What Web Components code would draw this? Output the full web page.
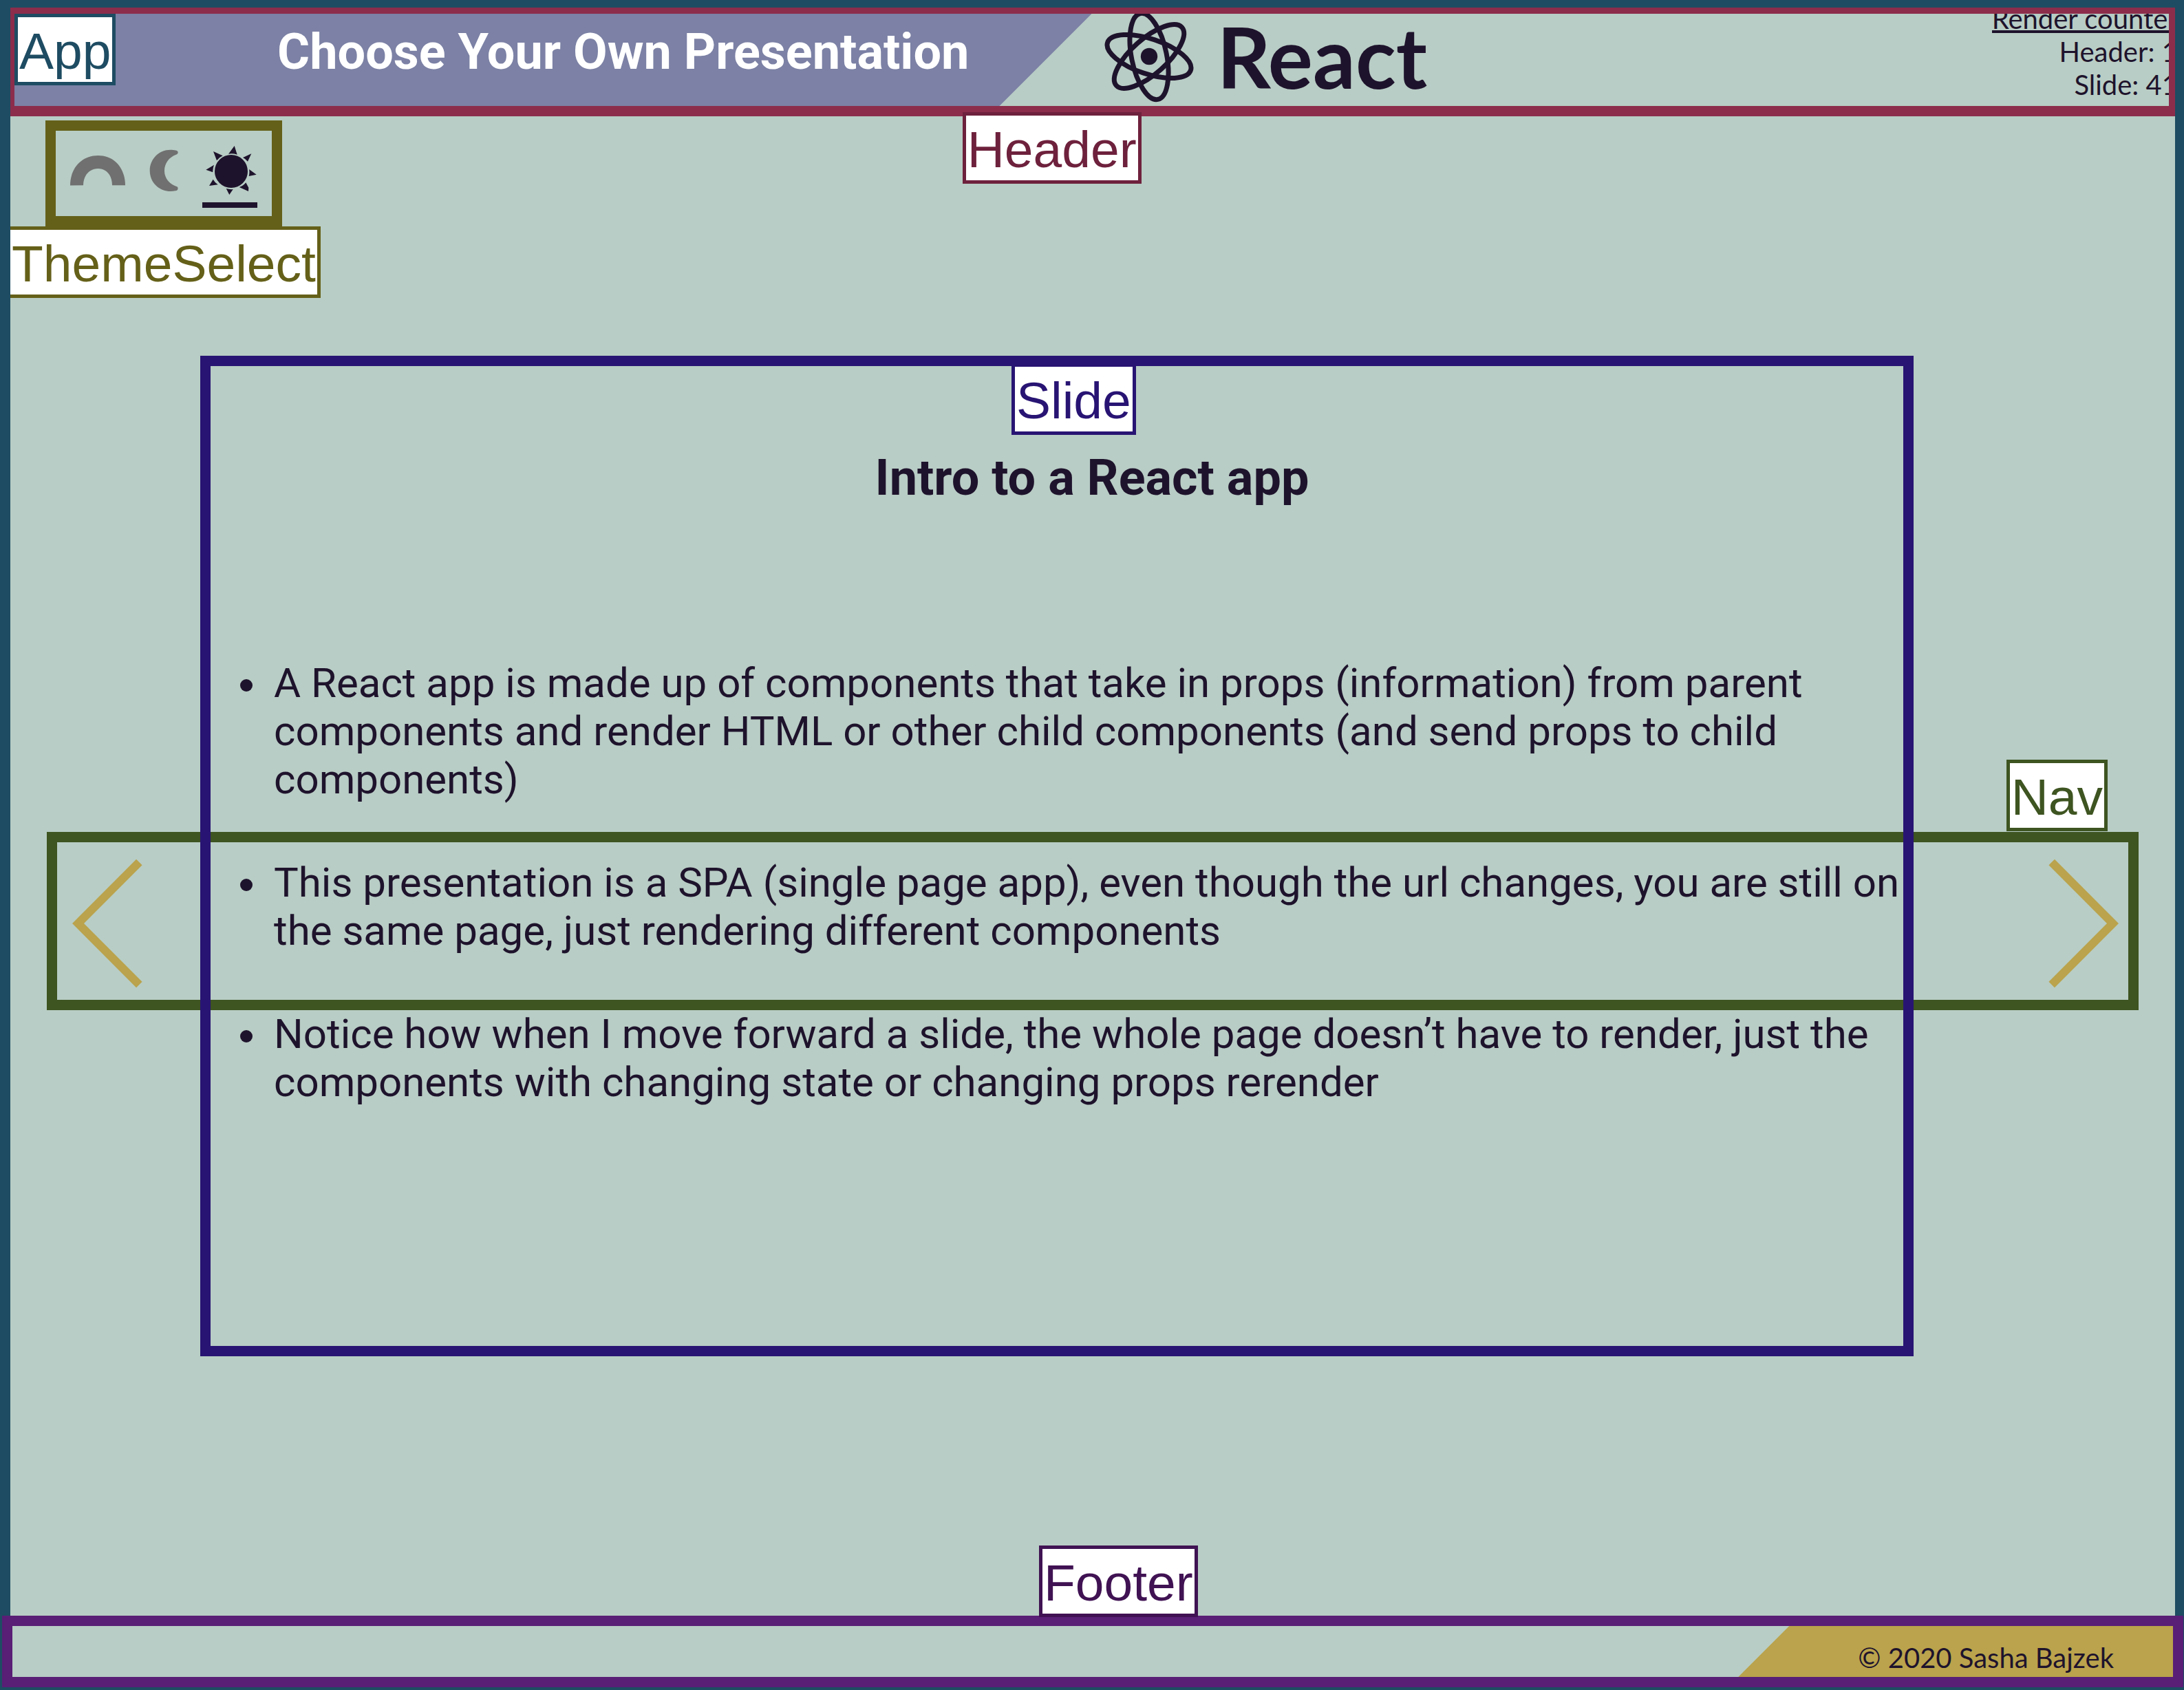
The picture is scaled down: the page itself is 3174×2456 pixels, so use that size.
<!DOCTYPE html>
<html lang="en">
<head>
<meta charset="utf-8">
<title>Choose Your Own Presentation</title>
<style>
  html, body { margin: 0; }
  body {
    --ink: #1e132c;
    --paper: #b8cdc5;
    --gold: #baa34c;
    color: var(--ink);
    background: var(--paper);
    font-family: Roboto, sans-serif;
  }
</style>
</head>
<body>
<deck-app></deck-app>

<script>
  const define = (name, html) => {
    const template = document.createElement('template');
    template.innerHTML = html;
    customElements.define(name, class extends HTMLElement {
      constructor() {
        super();
        this.attachShadow({ mode: 'open' }).append(template.content.cloneNode(true));
      }
    });
  };

  // Name tag pinned to the outline of a component
  define('name-tag', `
    <style>
      :host {
        display: block; position: absolute; z-index: 3; box-sizing: border-box;
        border: 5px solid; padding: 4px 2px 0; background: #fff;
        font: 75px/90px "Liberation Sans", sans-serif; white-space: nowrap;
      }
    </style>
    <slot></slot>`);

  // The orbit's top runs behind the header's border, so the box cuts it there
  define('react-mark', `
    <style>
      :host { display: block; height: 134px; overflow: clip; }
      svg { display: block; width: 134px; height: 134px; margin-top: -5px; overflow: visible; }
    </style>
    <svg viewBox="-67 -67 134 134" fill="none" stroke="currentColor" stroke-width="7" aria-hidden="true">
      <circle r="12.2" fill="currentColor" stroke="none"/>
      <ellipse rx="63.7" ry="25.5" transform="rotate(18.5)"/>
      <ellipse rx="63.7" ry="25.5" transform="rotate(78.5)"/>
      <ellipse rx="63.7" ry="25.5" transform="rotate(138.5)"/>
    </svg>`);

  define('render-counter', `
    <style>
      :host { display: block; height: 134px; overflow: clip; }
      div { margin: -17px -13px 0 0; font: 40px/48px Lato, sans-serif; text-align: right; white-space: nowrap; }
      p { margin: 0; }
      .head { text-decoration: underline; }
    </style>
    <div>
      <p class="head">Render counter</p>
      <p>Header: 1</p>
      <p>Slide: 41</p>
    </div>`);

  define('deck-header', `
    <style>
      :host {
        display: block; position: relative;
        border: solid #8c2d4c; border-width: 9px 9px 15px 6px;
      }
      .bar { display: flex; align-items: flex-start; height: 134px; }
      h1, h2 { margin: 0; white-space: nowrap; }
      h1 {
        flex: 0 0 50%; box-sizing: border-box; height: 134px; padding-left: 204px;
        background: #7c81a5; color: #fff; text-align: center;
        font: bold 72px/112px Roboto, sans-serif;
        clip-path: polygon(0 0, 100% 0, calc(100% - 134px) 100%, 0 100%);
      }
      .topic { display: flex; align-items: flex-start; gap: 32px; margin-left: 16px; }
      h2 { font: bold 122px/124px Lato, sans-serif; }
      render-counter { margin-left: auto; }
      name-tag { left: 44%; top: 143px; color: #6e213c; }
    </style>
    <div class="bar">
      <h1>Choose Your Own Presentation</h1>
      <div class="topic"><react-mark></react-mark><h2>React</h2></div>
      <render-counter></render-counter>
    </div>
    <name-tag>Header</name-tag>`);

  define('theme-select', `
    <style>
      :host {
        display: flex; gap: 16px; position: relative; width: fit-content;
        border: 15px solid #656019; padding: 12px 21px;
      }
      button {
        display: block; width: 80px; height: 100px; padding: 0; border: 0;
        border-bottom: 8px solid transparent; background: none; color: #707070; cursor: pointer;
      }
      button[aria-pressed="true"] { color: var(--ink); border-color: currentColor; }
      svg { display: block; width: 80px; height: 92px; fill: currentColor; }
      name-tag { left: -71px; top: 139px; color: #656019; }
    </style>
    <button type="button" aria-label="Rainbow theme" aria-pressed="false">
      <svg viewBox="0 0 80 92"><path d="M0 67.5C0 43 16 24 40.5 24S80 43 80 67.3H61C61 53 53 43 40.5 43S19 53 19 67.3Z"/></svg>
    </button>
    <button type="button" aria-label="Dark theme" aria-pressed="false">
      <svg viewBox="0 0 80 92"><path d="M59 17C55.500 16 52.500 15.700 49.700 15.700C33 15.700 19.700 29 19.700 46S33 76 49.700 76C52.500 76 55.500 75.700 58.500 75C61 74 61.500 69.500 58.500 69C48 65.500 41 57 41 46S48 26 58.500 22.500C61 21.500 61.500 18 59 17Z"/></svg>
    </button>
    <button type="button" aria-label="Light theme" aria-pressed="true">
      <svg viewBox="0 0 80 92">
        <circle cx="42" cy="47" r="24"/>
        <path d="M46.700 10L38 21.700Q44 20.500 50.700 22.700ZM71.300 21.300L59 27Q63 29 66 32.700ZM78.700 51.700L68 44Q69 49 67.700 54ZM67 76L53.700 70Q60 68 63.300 63.300L67.300 70.700ZM39.300 81L34.700 72Q40 73.500 44.700 73ZM10 68L15.700 58.700Q18 63 22.700 66.300ZM5.300 44.700L17 37.700Q15 43 15.300 48.300ZM16 18L29.700 24.300Q24 27 21 31.300Z"/>
      </svg>
    </button>
    <name-tag>ThemeSelect</name-tag>`);

  define('deck-slide', `
    <style>
      :host {
        display: block; position: relative; z-index: 1; box-sizing: border-box;
        border: 15px solid #281473; padding: 121px 0 348px; pointer-events: none;
      }
      name-tag { left: calc(50% - 66px); top: -4px; color: #281473; }
    </style>
    <slot></slot>
    <name-tag>Slide</name-tag>`);

  define('intro-slide', `
    <style>
      :host { display: block; }
      h3 { margin: 0 0 221px; padding-left: 102px; text-align: center; font: bold 72px/84px Roboto, sans-serif; }
      ul { margin: 0; padding: 0 0 0 92px; font: 60px/70px Roboto, sans-serif; list-style: none; }
      li + li { margin-top: 80px; }
      li::before {
        content: ""; display: inline-block; width: 18px; height: 18px; border-radius: 50%;
        margin: 0 31px 0 -49px; vertical-align: 8px; background: currentColor;
      }
    </style>
    <h3>Intro to a React app</h3>
    <ul>
      <li>A React app is made up of components that take in props (information) from parent components and render HTML or other child components (and send props to child components)</li>
      <li>This presentation is a SPA (single page app), even though the url changes, you are still on the same page, just rendering different components</li>
      <li>Notice how when I move forward a slide, the whole page doesn’t have to render, just the components with changing state or changing props rerender</li>
    </ul>`);

  define('deck-nav', `
    <style>
      :host { display: block; position: relative; box-sizing: border-box; border: 15px solid #3e5421; }
      nav { display: flex; justify-content: space-between; padding: 24px 14px 17px 22px; }
      a { display: block; color: var(--gold); }
      svg { display: block; width: 102px; height: 188px; fill: none; stroke: currentColor; stroke-width: 12; }
      name-tag { right: 30px; top: -120px; color: #3e5421; }
    </style>
    <nav aria-label="Slides">
      <a href="#previous" aria-label="Previous slide"><svg viewBox="0 0 102 188"><path d="M97.300 5L8.500 94L97.300 183"/></svg></a>
      <a href="#next" aria-label="Next slide"><svg viewBox="0 0 102 188"><path d="M4.700 5L93.500 94L4.700 183"/></svg></a>
    </nav>
    <name-tag>Nav</name-tag>`);

  define('deck-footer', `
    <style>
      :host { display: block; position: relative; border: 15px solid #591e76; background: var(--paper); }
      footer { display: flex; justify-content: flex-end; }
      p {
        margin: 0; padding: 22px 86px 4px 174px; background: var(--gold);
        font: 40px/48px Lato, sans-serif; white-space: nowrap;
        clip-path: polygon(74px 0, 100% 0, 100% 100%, 0 100%);
      }
      name-tag { left: calc(50% - 78px); top: -117px; color: #401253; }
    </style>
    <footer><p>© 2020 Sasha Bajzek</p></footer>
    <name-tag>Footer</name-tag>`);

  define('deck-app', `
    <style>
      :host {
        display: flex; flex-direction: column; position: relative; box-sizing: border-box;
        min-height: 100vh; border: solid #1e4c62; border-width: 11px 13px 4px 15px;
        background: var(--paper);
      }
      main { flex: 1; display: flex; flex-direction: column; overflow: clip; padding: 6px 0 188px; }
      theme-select { margin: 0 0 188px 51px; }
      .stage { flex: 1; display: grid; align-items: center; }
      .stage > * { grid-area: 1 / 1; }
      deck-slide { align-self: start; margin: 0 380px 0 276px; }
      deck-nav { margin: 0 53px; }
      deck-header { z-index: 1; }
      deck-footer { margin: 0 -12px; }
      .app { left: 6px; top: 9px; color: #1e4c62; }
    </style>
    <deck-header></deck-header>
    <main>
      <theme-select></theme-select>
      <div class="stage">
        <deck-nav></deck-nav>
        <deck-slide><intro-slide></intro-slide></deck-slide>
      </div>
    </main>
    <deck-footer></deck-footer>
    <name-tag class="app">App</name-tag>`);
</script>
</body>
</html>
